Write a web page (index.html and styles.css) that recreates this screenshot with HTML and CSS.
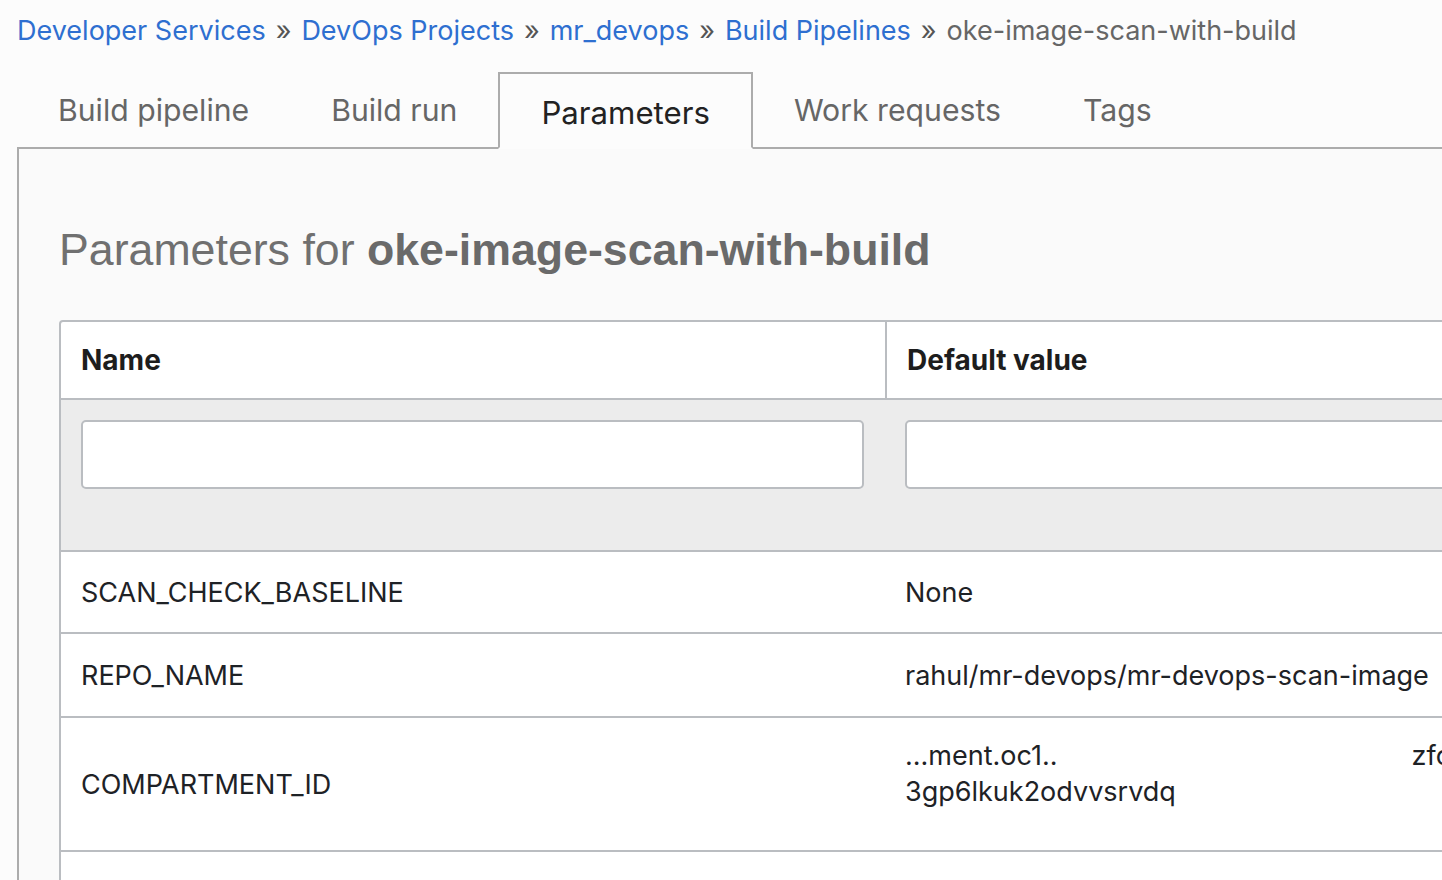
FILE: index.html
```html
<!DOCTYPE html>
<html lang="en">
<head>
<meta charset="utf-8">
<title>Parameters - oke-image-scan-with-build</title>
<link rel="stylesheet" href="styles.css">
</head>
<body>
<nav class="crumbs">
  <a href="#">Developer Services</a><span class="sep">»</span><a href="#">DevOps Projects</a><span class="sep">»</span><a href="#">mr_devops</a><span class="sep">»</span><a href="#">Build Pipelines</a><span class="sep">»</span><span class="current">oke-image-scan-with-build</span>
</nav>
<div class="tabs">
  <div class="tab">Build pipeline</div>
  <div class="tab">Build run</div>
  <div class="tab active">Parameters</div>
  <div class="tab">Work requests</div>
  <div class="tab">Tags</div>
  <div class="tab-fill"></div>
</div>
<section class="panel">
  <h1 class="title">Parameters for <b>oke-image-scan-with-build</b></h1>
  <div class="table">
    <div class="row head">
      <div class="cell c1">Name</div>
      <div class="cell c2">Default value</div>
    </div>
    <div class="row filters">
      <div class="cell c1"><input class="filter" type="text"></div>
      <div class="cell c2"><input class="filter" type="text"></div>
    </div>
    <div class="row r1">
      <div class="cell c1">SCAN_CHECK_BASELINE</div>
      <div class="cell c2">None</div>
    </div>
    <div class="row r2">
      <div class="cell c1">REPO_NAME</div>
      <div class="cell c2">rahul/mr-devops/mr-devops-scan-image</div>
    </div>
    <div class="row r3">
      <div class="cell c1">COMPARTMENT_ID</div>
      <div class="cell c2"><div class="ocid"><span>...ment.oc1..</span><span class="gap"></span><span>zfc</span></div><div>3gp6lkuk2odvvsrvdq</div></div>
    </div>
    <div class="row r4">
      <div class="cell c1"></div>
      <div class="cell c2"></div>
    </div>
  </div>
</section>
</body>
</html>
```

FILE: styles.css
```css
html, body {
  margin: 0;
  padding: 0;
  width: 1442px;
  height: 880px;
  overflow: hidden;
  background: #fcfcfc;
  font-family: Inter, "Noto Sans", sans-serif;
}

.crumbs {
  height: 60px;
  padding-left: 17px;
  display: flex;
  align-items: center;
  font-size: 27px;
  color: #666;
  white-space: nowrap;
}
.crumbs a {
  color: #2e6fd0;
  text-decoration: none;
}
.crumbs .sep {
  margin: 0 10px;
  color: #555;
}
.crumbs .current { color: #666; }

.tabs {
  margin-top: 12px;
  padding-left: 17px;
  display: flex;
  height: 77px;
}
.tab {
  padding: 0 41px;
  display: flex;
  align-items: center;
  font-size: 30.2px;
  color: #666;
  border-bottom: 2px solid #acacac;
  white-space: nowrap;
}
.tab.active {
  color: #222;
  font-size: 31.2px;
  padding-top: 4px;
  border: 2px solid #acacac;
  border-bottom-color: transparent;
  background: #fcfcfc;
}
.tab-fill {
  flex: 1;
  border-bottom: 2px solid #acacac;
}

.panel {
  margin-left: 17px;
  border-left: 2px solid #acacac;
  background: #fafafa;
  height: 740px;
  padding-left: 40px;
  overflow: hidden;
}

.title {
  margin: 0;
  padding-top: 75px;
  height: 96px;
  font-family: "Liberation Sans", Arial, sans-serif;
  font-weight: normal;
  font-size: 44.7px;
  line-height: 52px;
  color: #707070;
  white-space: nowrap;
}
.title b { font-weight: bold; color: #6a6a6a; }

.table {
  width: 1700px;
  border: 2px solid #babdc1;
  border-radius: 4px 0 0 0;
  background: #fff;
}
.row {
  display: flex;
  border-top: 2px solid #babdc1;
}
.row.head { border-top: none; height: 76px; }
.cell {
  padding-left: 20px;
  display: flex;
  flex-direction: column;
  justify-content: center;
  font-size: 27px;
  color: #1e2226;
}
.c1 { width: 804px; flex: none; }
.c2 { flex: 1; overflow: hidden; }
.head .cell { font-weight: 700; font-size: 28px; color: #1d1d1d; }
.head .c2 { border-left: 2px solid #babdc1; }

.filters {
  background: #ececec;
  height: 150px;
  align-items: flex-start;
}
.filters .cell { padding-top: 20px; }
.filter {
  box-sizing: border-box;
  width: 783px;
  height: 69px;
  border: 2px solid #babdc1;
  border-radius: 5px;
  background: #fff;
  margin: 0;
}
.filters .c2 .filter { width: 900px; }

.r1 { height: 80px; }
.r2 { height: 82px; }
.r3 { height: 132px; }
.r3 .c2 { line-height: 36px; padding-bottom: 20px; box-sizing: border-box; }
.r4 { height: 80px; }

.ocid { display: flex; white-space: nowrap; }
.ocid .gap { width: 354px; flex: none; }
```
